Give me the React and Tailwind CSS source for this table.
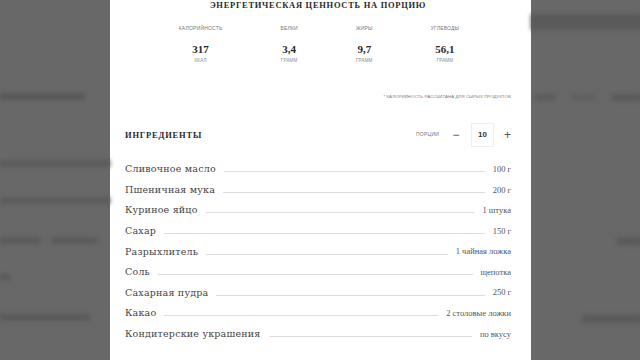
const nutrients = [
  { label: 'Калорийность', value: '317', unit: 'ккал' },
  { label: 'Белки', value: '3,4', unit: 'грамм' },
  { label: 'Жиры', value: '9,7', unit: 'грамм' },
  { label: 'Углеводы', value: '56,1', unit: 'грамм' },
];

const ingredients = [
  ['Сливочное масло', '100 г'],
  ['Пшеничная мука', '200 г'],
  ['Куриное яйцо', '1 штука'],
  ['Сахар', '150 г'],
  ['Разрыхлитель', '1 чайная ложка'],
  ['Соль', 'щепотка'],
  ['Сахарная пудра', '250 г'],
  ['Какао', '2 столовые ложки'],
  ['Кондитерские украшения', 'по вкусу'],
];

const serif = "font-['DejaVu_Serif',serif]";
const times = "font-['Liberation_Serif',serif]";
const sans = "font-['Liberation_Sans',Arial,sans-serif]";

function SideLeft() {
  return (
    <div className="w-[110px] shrink-0 flex flex-col blur-[2px]">
      <div className="h-[93px]" />
      <div className="h-[7px] w-[85px] bg-[#585858]" />
      <div className="h-[60px]" />
      <div className="h-[7px] w-full bg-[#5c5c5c]" />
      <div className="h-[30px]" />
      <div className="h-[7px] w-full bg-[#5c5c5c]" />
      <div className="h-[33px]" />
      <div className="flex gap-3">
        <div className="h-[7px] w-[40px] bg-[#5a5a5a]" />
        <div className="h-[7px] w-[45px] bg-[#5a5a5a]" />
      </div>
      <div className="h-[30px]" />
      <div className="h-[6px] w-[10px] bg-[#5a5a5a]" />
      <div className="h-[34px]" />
      <div className="h-[7px] w-[90px] bg-[#5a5a5a]" />
    </div>
  );
}

function SideRight() {
  return (
    <div className="flex-1 flex flex-col blur-[2px]">
      <div className="h-[14px]" />
      <div className="h-[16px] w-full bg-[#5a5a5a]" />
      <div className="h-[64px]" />
      <div className="flex gap-4 pl-[4px]">
        <div className="h-[7px] w-[20px] bg-[#5c5c5c]" />
        <div className="h-[7px] w-[25px] bg-[#606060]" />
        <div className="h-[7px] w-[30px] bg-[#5a5a5a]" />
      </div>
      <div className="h-[136px]" />
      <div className="flex justify-end">
        <div className="h-[8px] w-[25px] bg-[#5a5a5a]" />
      </div>
      <div className="h-[70px]" />
      <div className="flex justify-end">
        <div className="h-[8px] w-[60px] bg-[#5a5a5a]" />
      </div>
    </div>
  );
}

export default function App() {
  return (
    <div className="w-[640px] h-[360px] overflow-hidden bg-[#686868] flex">
      <SideLeft />
      <div className="w-[421px] shrink-0 bg-white pl-[15px] pr-[20px] flex flex-col">
        <h2 className={`${times} font-bold uppercase text-center text-[8.5px] tracking-[0.7px] text-[#2a2a2a] leading-[10px]`}>
          Энергетическая ценность на порцию
        </h2>

        <div className="flex justify-center gap-[58px] mt-[15px] pl-[2px]">
          {nutrients.map((n) => (
            <div key={n.label} className="flex flex-col items-center">
              <span className={`${sans} uppercase text-[5px] tracking-[0.2px] text-[#777] leading-[6px]`}>{n.label}</span>
              <span className={`${times} font-bold text-[11px] text-[#2a2a2a] leading-[12px] mt-[12px]`}>{n.value}</span>
              <span className={`${sans} uppercase text-[4.5px] tracking-[0.2px] text-[#888] leading-[6px] mt-[3px]`}>{n.unit}</span>
            </div>
          ))}
        </div>

        <p className={`${sans} uppercase text-right text-[4.3px] tracking-[0.1px] text-[#777] leading-[6px] mt-[30px]`}>
          * Калорийность рассчитана для сырых продуктов
        </p>

        <div className="flex items-center justify-between mt-[23px]">
          <h3 className={`${times} font-bold uppercase text-[8.5px] tracking-[0.8px] text-[#2a2a2a]`}>Ингредиенты</h3>
          <div className="flex items-center">
            <span className={`${sans} uppercase text-[5px] tracking-[0.2px] text-[#777] mr-[12px]`}>Порции</span>
            <span className={`${sans} text-[12px] text-[#555] leading-none w-[10px] text-center`}>−</span>
            <div className={`${sans} w-[23px] h-[24px] border border-[#eeeeee] mx-[10px] flex items-center justify-center text-[8px] font-bold text-[#333]`}>
              10
            </div>
            <span className={`${sans} text-[12px] text-[#555] leading-none`}>+</span>
          </div>
        </div>

        <div className="flex flex-col mt-[12px]">
          {ingredients.map(([name, amount]) => (
            <div key={name} className="flex items-center h-[20.6px]">
              <span className={`${serif} text-[9.5px] tracking-[0.2px] text-[#444] whitespace-nowrap`}>{name}</span>
              <div className="flex-1 h-px bg-[#dddddd] mx-[8px] mt-[5px]" />
              <span className={`${times} text-[8.5px] text-[#555] whitespace-nowrap`}>{amount}</span>
            </div>
          ))}
        </div>
      </div>
      <SideRight />
    </div>
  );
}
